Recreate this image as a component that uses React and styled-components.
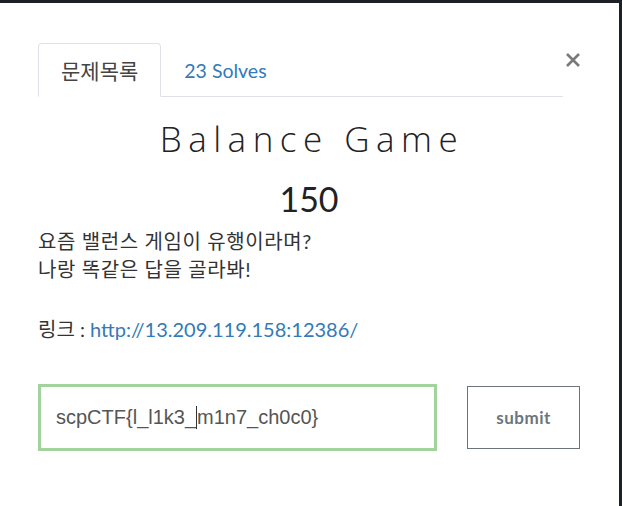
import React from "react";
import styled, { createGlobalStyle } from "styled-components";

const Global = createGlobalStyle`
  html, body { margin: 0; padding: 0; background: #1d2125; }
  body { font-family: Lato, "Noto Sans CJK KR", sans-serif; }
  #root { width: 622px; height: 506px; overflow: hidden; }
`;

const Modal = styled.div`
  margin-top: 3px;
  width: 619px;
  height: 503px;
  background: #fff;
  box-sizing: border-box;
  padding: 40px 39px 0 38px;
  display: flex;
  flex-direction: column;
`;

const Header = styled.div`
  display: flex;
  align-items: flex-start;
`;

const Nav = styled.div`
  display: flex;
  flex: 0 0 525px;
  border-bottom: 1px solid #dee2e6;
`;

const Tab = styled.div`
  height: 54px;
  box-sizing: border-box;
  display: flex;
  align-items: center;
  padding: 0 22px;
  margin-bottom: -1px;
  font-size: ${(p) => (p.$ko ? "21px" : "19.5px")};
  font-family: Lato, "Noto Sans CJK KR", sans-serif;
  color: ${(p) => (p.$active ? "#444" : "#337ab7")};
  border: 1px solid ${(p) => (p.$active ? "#dee2e6" : "transparent")};
  border-bottom-color: ${(p) => (p.$active ? "#fff" : "transparent")};
  border-radius: 4px 4px 0 0;
  background: ${(p) => (p.$active ? "#fff" : "transparent")};
`;

const Close = styled.div`
  margin-left: 3px;
  margin-top: 10px;
  width: 14px;
  height: 14px;
  display: flex;
`;

const Title = styled.h1`
  margin: 20px 0 0;
  padding-left: 6px;
  text-align: center;
  font-family: "Open Sans", sans-serif;
  font-weight: 300;
  font-size: 35px;
  letter-spacing: 6.5px;
  line-height: 44px;
  color: #222;
`;

const Points = styled.div`
  margin-top: 18px;
  text-align: center;
  font-family: Lato, sans-serif;
  font-size: 34px;
  line-height: 40px;
  color: #222;
`;

const Desc = styled.div`
  margin-top: 8px;
  font-family: Lato, "Noto Sans CJK KR", sans-serif;
  font-size: 20px;
  line-height: 28px;
  color: #333;
`;

const Para = styled.p`
  margin: 0 0 ${(p) => p.$gap || 0}px;
  letter-spacing: ${(p) => (p.$ko ? "0.6px" : "0")};
`;

const Link = styled.a`
  color: #337ab7;
  text-decoration: none;
  letter-spacing: 0;
`;

const Row = styled.div`
  margin-top: 41px;
  display: flex;
  align-items: center;
`;

const Input = styled.div`
  flex: 0 0 399px;
  height: 67px;
  box-sizing: border-box;
  border: 3px solid #a3d39c;
  padding-left: 15px;
  display: flex;
  align-items: center;
  font-family: "Liberation Sans", Arial, sans-serif;
  font-size: 20px;
  color: #555;
`;

const Caret = styled.span`
  display: inline-block;
  width: 1px;
  height: 23px;
  background: #333;
`;

const Button = styled.button`
  margin-left: 30px;
  flex: 0 0 113px;
  height: 63px;
  background: #fff;
  border: 1px solid #6c757d;
  border-radius: 0;
  font-family: Lato, sans-serif;
  font-weight: 700;
  font-size: 17px;
  color: #6c757d;
  letter-spacing: 0.5px;
`;

export default function App() {
  return (
    <>
      <Global />
      <Modal>
        <Header>
          <Nav>
            <Tab $active $ko>문제목록</Tab>
            <Tab>23 Solves</Tab>
          </Nav>
          <Close>
            <svg width="14" height="14" viewBox="0 0 14 14">
              <path d="M1 1 L13 13 M13 1 L1 13" stroke="#7a7a7a" strokeWidth="2.6" />
            </svg>
          </Close>
        </Header>
        <Title>Balance Game</Title>
        <Points>150</Points>
        <Desc>
          <Para $ko>요즘 밸런스 게임이 유행이라며?</Para>
          <Para $ko $gap={32}>나랑 똑같은 답을 골라봐!</Para>
          <Para>
            링크 : <Link href="#">http://13.209.119.158:12386/</Link>
          </Para>
        </Desc>
        <Row>
          <Input>
            scpCTF{"{"}l_l1k3_<Caret />m1n7_ch0c0{"}"}
          </Input>
          <Button>submit</Button>
        </Row>
      </Modal>
    </>
  );
}
